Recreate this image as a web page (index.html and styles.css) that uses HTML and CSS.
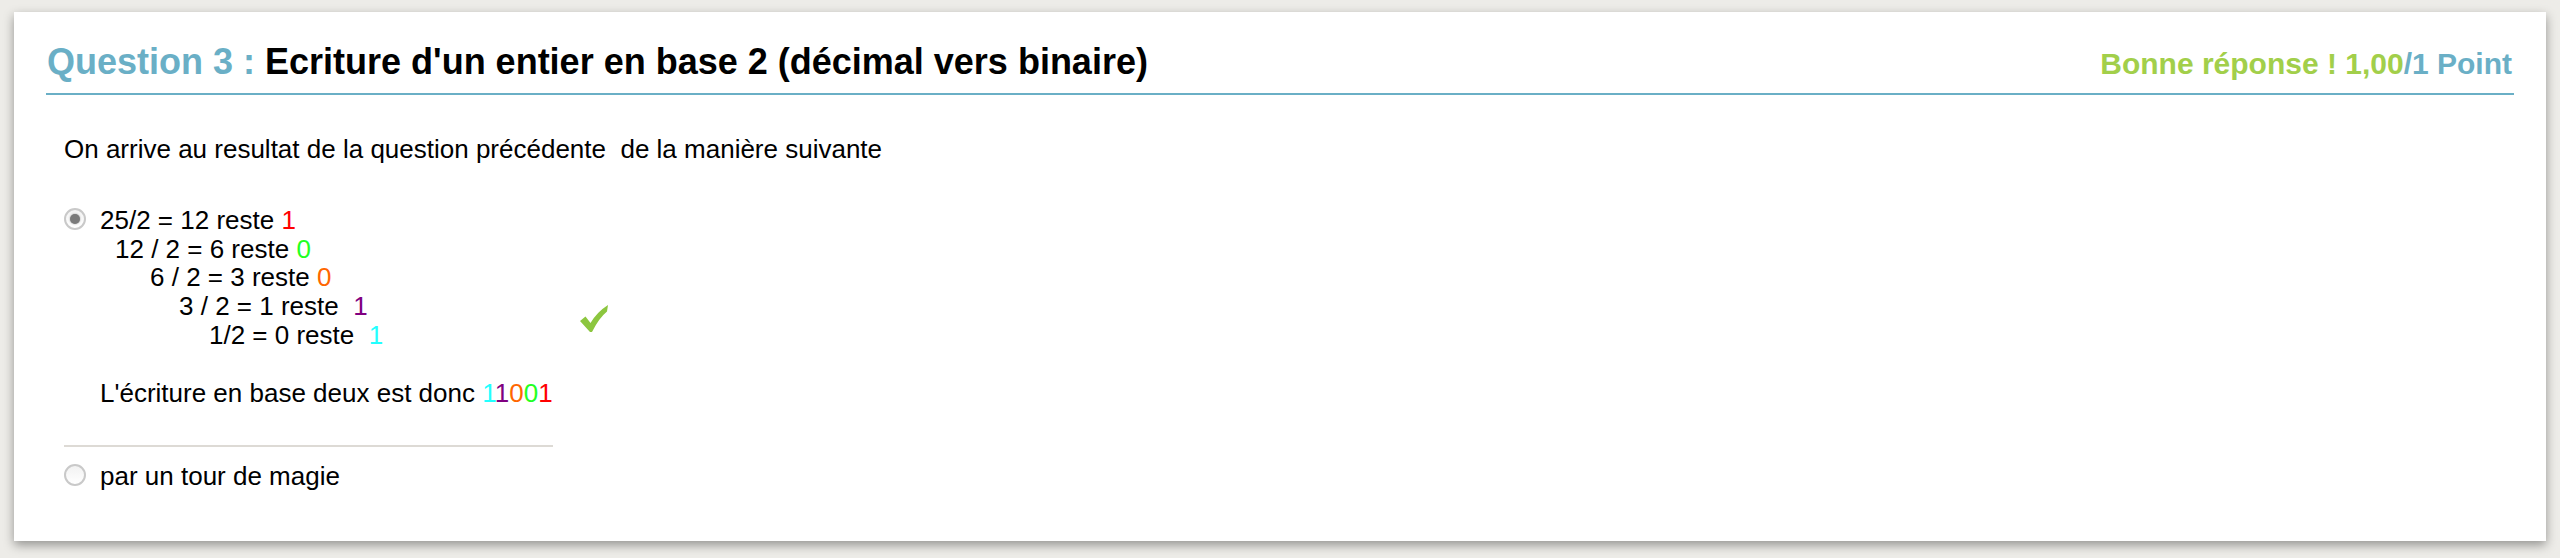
FILE: index.html
```html
<!DOCTYPE html>
<html lang="fr">
<head>
<meta charset="utf-8">
<title>Question 3</title>
<link rel="stylesheet" href="styles.css">
</head>
<body>
<div class="card">
  <div class="q-header">
    <h2 class="q-title"><span class="q-num">Question 3 : </span>Ecriture d'un entier en base 2 (décimal vers binaire)</h2>
    <div class="q-score"><span class="ok">Bonne réponse ! 1,00</span>/1 Point</div>
  </div>
  <div class="q-body">
    <p class="q-text">On arrive au resultat de la question précédente &nbsp;de la manière suivante</p>
    <ul class="answers">
      <li class="answer">
        <div class="answer-box">
          <span class="radio checked"></span>
          <div class="label">
            <div class="l1">25/2 = 12 reste <span class="c-red">1</span></div>
            <div class="l2">12 / 2 = 6 reste <span class="c-green">0</span></div>
            <div class="l3">6 / 2 = 3 reste <span class="c-orange">0</span></div>
            <div class="l4">3 / 2 = 1 reste &nbsp;<span class="c-purple">1</span></div>
            <div class="l5">1/2 = 0 reste &nbsp;<span class="c-cyan">1</span></div>
            <div class="blank">&nbsp;</div>
            <div class="l1">L'écriture en base deux est donc <span class="c-cyan">1</span><span class="c-purple">1</span><span class="c-orange">0</span><span class="c-green">0</span><span class="c-red">1</span></div>
          </div>
        </div>
        <svg class="check" width="30" height="30" viewBox="0 0 30 30" aria-hidden="true">
          <path d="M1 18 L6.5 13.5 L11.5 20 Q18 9 29 2 L28 8.5 Q20 15 13 29 L11 29 Z" fill="#8cc63f"/>
        </svg>
      </li>
      <li class="answer">
        <div class="answer-box last">
          <span class="radio"></span>
          <div class="label">
            <div class="l1">par un tour de magie</div>
          </div>
        </div>
      </li>
    </ul>
  </div>
</div>
</body>
</html>
```
FILE: styles.css
```css
html, body {
  margin: 0;
  padding: 0;
}
body {
  background: #edece8;
  padding: 12px 14px 17px 14px;
  font-family: "Liberation Sans", Arial, Helvetica, sans-serif;
  color: #000;
}
.card {
  background: #fff;
  height: 529px;
  box-sizing: border-box;
  padding: 0 32px;
  box-shadow: 0 4px 10px rgba(0, 0, 0, 0.38);
}
.q-header {
  display: flex;
  justify-content: space-between;
  align-items: baseline;
  padding-top: 29px;
  padding-bottom: 9px;
  border-bottom: 2px solid #6aafc6;
  padding-left: 1px;
  padding-right: 2px;
}
.q-title {
  margin: 0;
  font-size: 36px;
  line-height: 41px;
  font-weight: bold;
}
.q-num {
  color: #6aafc6;
}
.q-score {
  font-size: 30px;
  line-height: 41px;
  font-weight: bold;
  color: #6aafc6;
}
.ok {
  color: #a2cf4a;
}
.q-body {
  padding-left: 18px;
  font-size: 26px;
  line-height: 28.8px;
}
.q-text {
  margin: 40px 0 0 0;
}
.answers {
  list-style: none;
  margin: 42px 0 0 0;
  padding: 0;
}
.answer {
  display: flex;
  align-items: center;
}
.answer-box {
  width: 489px;
  display: flex;
  align-items: flex-start;
  padding-bottom: 38px;
  border-bottom: 2px solid #dddad5;
}
.answer-box.last {
  border-bottom: none;
  padding-top: 15px;
  padding-bottom: 0;
}
.radio {
  flex: none;
  width: 18px;
  height: 18px;
  margin-top: 2px;
  margin-right: 14px;
  border: 2px solid #c9c9c9;
  border-radius: 50%;
  background: linear-gradient(#f2f2f2, #ffffff);
  position: relative;
}
.radio.checked::after {
  content: "";
  position: absolute;
  left: 4px;
  top: 4px;
  width: 10px;
  height: 10px;
  border-radius: 50%;
  background: #7a7a7a;
  box-shadow: 0 0 2px rgba(0, 0, 0, 0.4);
}
.label {
  white-space: nowrap;
}
.l2 { padding-left: 15px; }
.l3 { padding-left: 50px; }
.l4 { padding-left: 79px; }
.l5 { padding-left: 109px; }
.c-red { color: #ff0000; }
.c-green { color: #22ff22; }
.c-orange { color: #ff6600; }
.c-purple { color: #800080; }
.c-cyan { color: #22ffff; }
.check {
  margin-left: 26px;
  margin-bottom: 18px;
  flex: none;
}
```
